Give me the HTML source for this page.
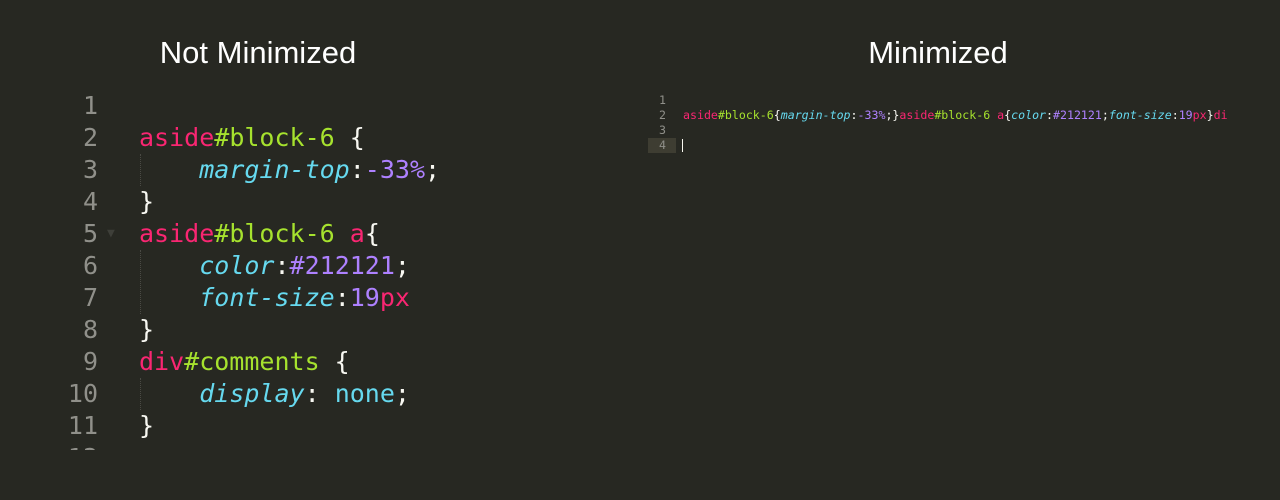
<!DOCTYPE html>
<html><head><meta charset="utf-8"><style>
body{margin:0;width:1280px;height:500px;background:#272822;overflow:hidden;position:relative;font-family:"DejaVu Sans Mono","Liberation Mono",monospace}
.t{position:absolute;top:35px;font-family:"Liberation Sans",sans-serif;font-size:31px;color:#fff;width:400px;text-align:center}
.ed{position:absolute;left:0;top:90px;height:360px;overflow:hidden;width:600px}
.l{position:relative;height:32px;line-height:32px;font-size:25px;white-space:pre;color:#f8f8f2}
.n{position:absolute;left:0;width:98px;text-align:right;color:#90908a}
.c{position:absolute;left:139px}
.p{color:#f92672}.g{color:#a6e22e}.b{color:#66d9ef}.i{color:#66d9ef;font-style:italic}.v{color:#ae81ff}
.guide{position:absolute;left:140px;border-left:1px dotted #4a4a44;}
.ed2{position:absolute;left:648px;top:93px}
.l2{position:relative;height:15px;line-height:15px;font-size:11.6px;white-space:pre;color:#f8f8f2}
.n2{position:absolute;left:0;width:18px;text-align:right;color:#90908a}
.c2{position:absolute;left:35px}
</style></head><body>
<div class="t" style="left:58px">Not Minimized</div>
<div class="t" style="left:738px">Minimized</div>
<div class="ed">
<div class="guide" style="top:64px;height:32px"></div>
<div class="guide" style="top:160px;height:64px"></div>
<div class="guide" style="top:288px;height:32px"></div>
<div class="l"><span class="n">1</span></div>
<div class="l"><span class="n">2</span><span class="c"><span class="p">aside</span><span class="g">#block-6</span> {</span></div>
<div class="l"><span class="n">3</span><span class="c">    <span class="i">margin-top</span>:<span class="v">-33%</span>;</span></div>
<div class="l"><span class="n">4</span><span class="c">}</span></div>
<div class="l"><span class="n">5</span><span style="position:absolute;left:107px;top:0;color:#3e3f39;font-size:13px">▼</span><span class="c"><span class="p">aside</span><span class="g">#block-6</span> <span class="p">a</span>{</span></div>
<div class="l"><span class="n">6</span><span class="c">    <span class="i">color</span>:<span class="v">#212121</span>;</span></div>
<div class="l"><span class="n">7</span><span class="c">    <span class="i">font-size</span>:<span class="v">19</span><span class="p">px</span></span></div>
<div class="l"><span class="n">8</span><span class="c">}</span></div>
<div class="l"><span class="n">9</span><span class="c"><span class="p">div</span><span class="g">#comments</span> {</span></div>
<div class="l"><span class="n">10</span><span class="c">    <span class="i">display</span>: <span class="b">none</span>;</span></div>
<div class="l"><span class="n">11</span><span class="c">}</span></div>
<div class="l"><span class="n">12</span></div>
</div>
<div class="ed2">
<div class="l2"><span class="n2">1</span></div>
<div class="l2"><span class="n2">2</span><span class="c2"><span class="p">aside</span><span class="g">#block-6</span>{<span class="i">margin-top</span>:<span class="v">-33%</span>;}<span class="p">aside</span><span class="g">#block-6</span> <span class="p">a</span>{<span class="i">color</span>:<span class="v">#212121</span>;<span class="i">font-size</span>:<span class="v">19</span><span class="p">px</span>}<span class="p">di</span></span></div>
<div class="l2"><span class="n2">3</span></div>
<div class="l2"><span style="position:absolute;left:0;top:0;width:28px;height:15px;background:#3e3d32"></span><span class="n2">4</span><span style="position:absolute;left:34px;top:1px;width:1px;height:13px;background:#f8f8f0"></span></div>
</div>
</body></html>
